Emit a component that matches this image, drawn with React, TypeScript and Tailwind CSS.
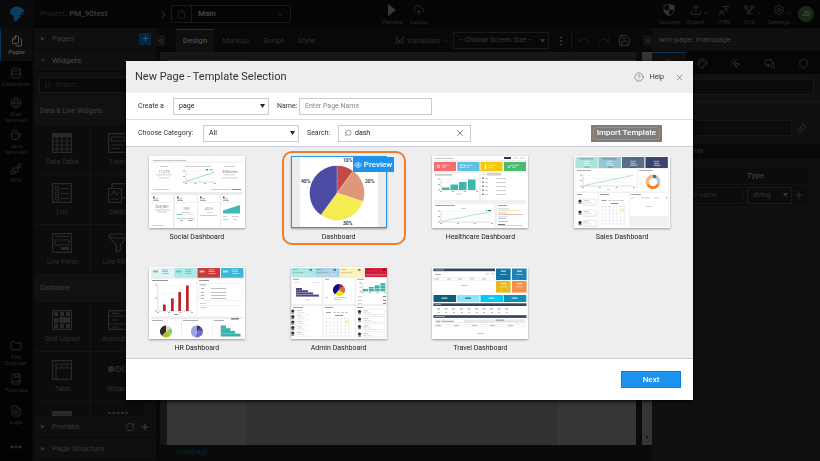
import React from "react";
import {
  ChevronDown, ChevronRight, ChevronsLeft, ChevronsRight, CircleHelp, CloudUpload, Coffee, Database, Eye,
  File, FileText, Files, Folder, GitFork, Globe, Languages, Link, MonitorSmartphone, MousePointerClick,
  Palette, Plus, Redo, RotateCw, Save, Search, Settings, Shield, Undo, Upload, X, BookMarked, Ellipsis,
  EllipsisVertical,
} from "lucide-react";

type Kids = { children?: React.ReactNode };

/* ---------- thumbnail drawing helpers (96 x 72 canvas) ---------- */

type BoxProps = { x: number; y: number; w: number; h: number; c?: string };
const Box = ({ x, y, w, h, c = "#ffffff" }: BoxProps) => <rect x={x} y={y} width={w} height={h} fill={c} />;
const Dash = ({ x, y, w, c = "#c4c4c4" }: { x: number; y: number; w: number; c?: string }) => (
  <rect x={x} y={y} width={w} height={0.8} fill={c} />
);

function slice(cx: number, cy: number, r: number, from: number, to: number) {
  const a = from * 2 * Math.PI;
  const b = to * 2 * Math.PI;
  const large = to - from > 0.5 ? 1 : 0;
  return `M${cx} ${cy}L${cx + r * Math.sin(a)} ${cy - r * Math.cos(a)}A${r} ${r} 0 ${large} 1 ${cx + r * Math.sin(b)} ${cy - r * Math.cos(b)}Z`;
}

function Pie({ cx, cy, r, parts }: { cx: number; cy: number; r: number; parts: [number, string][] }) {
  let at = 0;
  return (
    <g>
      {parts.map(([share, color], i) => {
        const d = slice(cx, cy, r, at, at + share);
        at += share;
        return <path key={i} d={d} fill={color} />;
      })}
    </g>
  );
}

function Canvas({ children, label }: Kids & { label: string }) {
  return (
    <svg viewBox="0 0 96 72" className="block h-[72px] w-24" role="img" aria-label={label} fontFamily="Roboto, sans-serif">
      {children}
    </svg>
  );
}

const Axes = ({ x, y, w, h }: { x: number; y: number; w: number; h: number }) => (
  <g>
    <path d={`M${x} ${y}h${w}M${x} ${y + h / 3}h${w}M${x} ${y + (2 * h) / 3}h${w}`} stroke="#eeeeee" strokeWidth={0.5} />
    <path d={`M${x} ${y}v${h}h${w}`} stroke="#bbbbbb" strokeWidth={0.5} fill="none" />
    {[0, 0.5, 1].map((k) => <Dash key={k} x={x - 3} y={y + k * h - 0.4} w={2} c="#999999" />)}
    {[0, 0.33, 0.66, 1].map((k) => <Dash key={k} x={x + k * w - 1} y={y + h + 1} w={2} c="#999999" />)}
  </g>
);

const Calendar = ({ x, y }: { x: number; y: number }) => (
  <g>
    <Dash x={x} y={y - 5} w={5} c="#888888" />
    {[7, 11, 15, 19].map((k) => <Dash key={k} x={x + k} y={y - 5} w={3} c="#bbbbbb" />)}
    <Dash x={x + 9} y={y - 2} w={8} c="#777777" />
    <Box x={x + 19} y={y + 3} w={4} h={4} c="#fdf0c4" />
    {[0, 1, 2, 3, 4, 5].map((r) =>
      [0, 1, 2, 3, 4, 5, 6].map((c) => <Box key={`${r}-${c}`} x={x + c * 3.7} y={y + 1 + r * 3.5} w={1} h={1} c="#c8c8c8" />)
    )}
    <path d={[0, 1, 2, 3, 4, 5].map((r) => `M${x - 1} ${y + 3 + r * 3.5}h27`).join("")} stroke="#ededed" strokeWidth={0.3} />
  </g>
);

const People = ({ x, ys }: { x: number; ys: number[] }) => (
  <g>
    {ys.map((y) => (
      <g key={y}>
        <circle cx={x} cy={y} r={1.6} fill="#2c2c2c" />
        <rect x={x - 1.5} y={y + 1.4} width={3} height={1.4} fill="#8a8a8a" />
        <Dash x={x + 4} y={y - 1} w={5} />
        <Dash x={x + 4} y={y + 1} w={8} c="#dcdcdc" />
        <path d={`M${x + 3} ${y + 3.4}h14`} stroke="#dddddd" strokeWidth={0.4} />
      </g>
    ))}
  </g>
);

function SocialArt() {
  return (
    <Canvas label="Social Dashboard">
      <Box x={2} y={1} w={92} h={70} c="#ededed" />
      <Box x={2} y={1} w={92} h={35} />
      <text x={4} y={4.6} fontSize={2} fill="#666">Dashboard Information and Statistics</text>
      <Dash x={2} y={5.6} w={92} c="#e6e6e6" />
      <Dash x={11} y={10} w={8} /><Dash x={36} y={10} w={26} /><Dash x={75} y={10} w={11} />
      <text x={15} y={17} fontSize={3.6} textAnchor="middle" fill="#777">11,275</text>
      <text x={81} y={17} fontSize={3.6} textAnchor="middle" fill="#777">8 Months</text>
      <Dash x={7} y={18.5} w={16} /><Dash x={10} y={21.5} w={10} /><Dash x={75} y={18.5} w={11} /><Dash x={73} y={21.5} w={16} />
      <Axes x={37} y={15} w={29} h={11} />
      <path d="M37 25.5L66 16" stroke="#5cc4c0" strokeWidth={0.6} />
      <Box x={57} y={13} w={2} h={1.5} c="#1aa8a2" /><Dash x={60} y={13.3} w={4} c="#999999" />
      <Dash x={4} y={33} w={16} /><Dash x={62} y={33} w={20} /><Dash x={83} y={33} w={9} c="#666666" />
      {[2, 26, 49, 72].map((x) => (
        <g key={x}>
          <Box x={x} y={39} w={22} h={32} />
          <Box x={x + 2} y={40.5} w={1.5} h={1.5} c="#444444" />
          <Dash x={x + 2} y={42.5} w={5} c="#999999" />
          <Dash x={x + 2} y={44} w={6} c="#999999" />
          <Dash x={x} y={46} w={22} c="#eeeeee" />
        </g>
      ))}
      <text x={13} y={52} fontSize={3.6} textAnchor="middle" fill="#666">$25,987</text>
      <Dash x={6} y={53.5} w={15} /><Dash x={8} y={55.5} w={10} /><Dash x={3} y={69} w={12} />
      <text x={37} y={53.5} fontSize={3.6} textAnchor="middle" fill="#777">153</text>
      <Dash x={32} y={56} w={9} /><Dash x={28} y={58} w={5} c="#45c0ba" /><Dash x={33} y={58} w={12} c="#e4e4e4" />
      <Dash x={28} y={62} w={18} /><Dash x={31} y={64} w={3} c="#999999" /><Dash x={39} y={64} w={5} c="#999999" />
      <text x={60} y={53.5} fontSize={3.6} textAnchor="middle" fill="#55b84d">402+</text>
      <Dash x={58} y={56} w={5} /><Dash x={51} y={59} w={17} />
      <path d="M74 57.5V54.5L91 49V57.5Z" fill="#40b9b4" />
      <Dash x={74} y={60} w={4} /><Dash x={83} y={60} w={7} /><Dash x={74} y={63} w={5} /><Dash x={84} y={63} w={4} />
    </Canvas>
  );
}

function PieArt() {
  return (
    <Canvas label="Dashboard">
      <Box x={0} y={0} w={96} h={72} c="#ececec" />
      <Box x={9} y={0} w={78} h={72} />
      <Pie cx={46} cy={37} r={27.3} parts={[[0.1, "#c44a4a"], [0.2, "#dc9878"], [0.3, "#f5ec50"], [0.4, "#4c4ba4"]]} />
      {[0, 0.1, 0.3, 0.6].map((k) => (
        <path key={k} d={`M46 37L${46 + 27.3 * Math.sin(k * 2 * Math.PI)} ${37 - 27.3 * Math.cos(k * 2 * Math.PI)}`} stroke="#ffffff" strokeWidth={0.3} />
      ))}
      <g fontSize={5} fontWeight={500} fill="#222">
        <text x={52} y={6}>10%</text>
        <text x={74} y={27}>20%</text>
        <text x={52} y={69}>30%</text>
        <text x={10} y={27}>40%</text>
      </g>
    </Canvas>
  );
}

function HealthArt() {
  return (
    <Canvas label="Healthcare Dashboard">
      <Box x={2} y={4} w={92} h={67} c="#f1f1f1" />
      <text x={2} y={3.2} fontSize={2} fill="#777">Healthcare Dashboard</text>
      <Box x={72} y={1} w={7} h={2} c="#2b3750" /><Dash x={81} y={1.6} w={5} /><Dash x={88} y={1.6} w={5} />
      {([[2, "#f76c6c"], [25.5, "#5cc0de"], [48.5, "#f8c908"], [72, "#4dba71"]] as [number, string][]).map(([x, c]) => (
        <g key={x}>
          <Box x={x} y={6} w={22} h={9} c={c} />
          <Dash x={x + 8} y={8.8} w={7} c="#ffffffb0" />
          <Dash x={x + 8} y={10.8} w={4} c="#ffffffb0" />
        </g>
      ))}
      <circle cx={6.5} cy={10.3} r={1.3} fill="none" stroke="#fff" strokeWidth={0.8} />
      <rect x={28.5} y={9} width={4} height={2.6} fill="none" stroke="#fff" strokeWidth={0.6} />
      <path d="M53.5 8.5v3M52 12h3" stroke="#fff" strokeWidth={1} />
      <path d="M75.5 10.5l1.3 1.3 2.4-3" stroke="#fff" strokeWidth={0.9} fill="none" />
      <Box x={2} y={17} w={45} h={27} />
      <Dash x={3} y={18.5} w={17} c="#888888" />
      <Axes x={9} y={23} w={36} h={11} />
      <g fill="#3bb7ab"><rect x={10} y={31.5} width={7.5} height={2.5} /><rect x={18.5} y={28.5} width={7.5} height={5.5} /><rect x={27} y={26} width={7.5} height={8} /><rect x={36} y={23.5} width={7.5} height={10.5} /></g>
      <Dash x={24} y={37.5} w={6} />
      <Box x={49} y={17} w={45} h={27} />
      <Dash x={50} y={18} w={4} /><Box x={55} y={17} w={14} h={2.6} c="#cfcfcf" />
      {[22, 26, 30, 34, 38].map((y) => (
        <g key={y}><Box x={50.5} y={y - 0.5} w={1} h={1.6} c="#222222" /><Dash x={53} y={y} w={3} /><Dash x={64} y={y} w={10} /></g>
      ))}
      <Box x={2} y={48} w={60} h={23} /><Box x={65} y={48} w={29} h={23} />
      <Dash x={3} y={49} w={20} c="#888888" /><Dash x={66} y={49} w={9} c="#888888" /><Dash x={29} y={52} w={5} />
      <Axes x={9} y={55} w={51} h={11} />
      <path d="M9 65.5L59 55.5" stroke="#84c8dd" strokeWidth={0.6} />
      <Box x={54} y={54} w={1} h={1} c="#1789a8" /><Dash x={56} y={54} w={3} c="#333333" />
      <Dash x={66} y={52.5} w={11} /><Dash x={66} y={54} w={22} c="#e8e0b0" />
      <Dash x={66} y={56.5} w={9} /><Dash x={66} y={58} w={25} c="#f4a6a6" />
      <Dash x={66} y={60.5} w={9} /><Dash x={66} y={62} w={8} c="#8ecbe0" />
      <Dash x={66} y={65} w={10} c="#70cdb3" /><Dash x={66} y={69} w={25} c="#e7c0b0" /><Dash x={66} y={68} w={7} c="#555555" />
    </Canvas>
  );
}

function SalesArt() {
  return (
    <Canvas label="Sales Dashboard">
      <Box x={1} y={1} w={94} h={70} c="#f2f2f2" />
      {([[1.5, "#a9e5dc"], [24.7, "#94c6d4"], [48, "#596d8b"], [71.5, "#3a426f"]] as [number, string][]).map(([x, c]) => (
        <g key={x}>
          <Box x={x} y={1} w={22.3} h={11} c={c} />
          <Dash x={x + 4} y={2.5} w={14} c="#44505ca0" /><Dash x={x + 8} y={4.8} w={6} c="#ffffff90" />
          <Dash x={x + 8.5} y={6.8} w={5} c="#ffffffc0" /><Dash x={x + 8} y={8.8} w={7} c="#ffffffc0" /><Dash x={x + 9} y={10.6} w={5} c="#44505ca0" />
        </g>
      ))}
      <Box x={1.5} y={13} w={61} h={22.5} /><Box x={64} y={13} w={30} h={22.5} />
      <Dash x={3} y={14} w={14} c="#999999" /><Dash x={65} y={14} w={14} c="#999999" />
      <Axes x={9} y={19} w={51} h={11} />
      <path d="M9 29.7L59 19.3" stroke="#84cbd8" strokeWidth={0.6} />
      <Dash x={33} y={33} w={3} />
      <g fill="none" strokeWidth={3}>
        <circle cx={79} cy={26} r={5.7} stroke="#ff7a12" />
        <path d="M79 20.3A5.7 5.7 0 0 1 82 21.2" stroke="#1c78b8" />
        <path d="M82 21.2A5.7 5.7 0 0 1 84 28.7" stroke="#a9cfec" />
        <path d="M74 28.7A5.7 5.7 0 0 1 79 20.3" stroke="#fdb77a" />
      </g>
      <Box x={1.5} y={37} w={22} h={34} /><Box x={25} y={37} w={30} h={34} /><Box x={56} y={37} w={38} h={23} />
      <Dash x={3} y={38} w={5} c="#888888" /><Dash x={26} y={38} w={9} c="#888888" /><Dash x={57} y={38} w={10} c="#888888" />
      <People x={6} ys={[45, 56, 66.5]} />
      <g fill="none" stroke="#cccccc" strokeWidth={0.4}><rect x={9} y={43} width={13} height={6.5} /><rect x={9} y={54} width={13} height={6.5} /><rect x={9} y={64.5} width={13} height={6} /></g>
      <Calendar x={27.5} y={49} />
      <Dash x={57} y={41.5} w={3} /><Dash x={67} y={41.5} w={9} /><Dash x={80} y={41.5} w={5} /><Box x={92} y={41} w={1} h={1.5} c="#999999" /><Dash x={72} y={50} w={6} />
      <Box x={56} y={60} w={38} h={11} c="#f1f1f1" />
    </Canvas>
  );
}

function HrArt() {
  return (
    <Canvas label="HR Dashboard">
      <Box x={2} y={1} w={92} h={70} c="#eeeeee" />
      {([[2, "#e1f3f7", "#9dabb0"], [25.3, "#a9eae8", "#7cb9b7"], [48.5, "#c73a3b", "#e9b1b1"], [72, "#3db8d8", "#a7e0ee"]] as [number, string, string][]).map(([x, c, t]) => (
        <g key={x}>
          <Box x={x} y={1} w={22.5} h={9.7} c={c} />
          <Box x={x + 2} y={3.5} w={5} h={2} c={t} /><Dash x={x + 11} y={2.5} w={6} c={t} /><Dash x={x + 11} y={4.2} w={6} c={t} /><Dash x={x + 11} y={6} w={7} c={t} />
        </g>
      ))}
      <Box x={2} y={12} w={45.5} h={37.5} /><Box x={48.5} y={12} w={45.5} h={37.5} />
      <Dash x={3} y={13} w={16} c="#777777" /><Dash x={50} y={13} w={10} c="#777777" />
      <Axes x={9} y={18} w={34} h={26} />
      <path d="M15 18v26M23 18v26M30.5 18v26M38 18v26" stroke="#e4e4e4" strokeWidth={0.4} />
      <g fill="#bf2328"><rect x={14} y={37.5} width={2.7} height={6.5} /><rect x={22} y={31.3} width={2.7} height={12.7} /><rect x={29.3} y={25} width={2.7} height={19} /><rect x={37} y={18.5} width={2.7} height={25.5} /></g>
      <Dash x={25} y={47} w={4} c="#777777" />
      <rect x={50} y={16.5} width={43} height={17} fill="none" stroke="#e0e0e0" strokeWidth={0.4} />
      <Dash x={51} y={17.5} w={6} c="#999999" />
      {[21, 25, 28, 31].map((y) => <g key={y}><Dash x={52} y={y} w={3} c="#999999" /><Dash x={62} y={y} w={15} c="#b0b0b0" /></g>)}
      <Dash x={51} y={36} w={6} /><Dash x={50} y={38} w={43} c="#eeeeee" /><Dash x={51} y={40} w={7} />
      <Box x={2} y={52} w={30} h={19} /><Box x={33} y={52} w={30} h={19} /><Box x={64} y={52} w={30} h={19} />
      <Box x={82} y={51} w={8} h={1.6} c="#888888" />
      <Dash x={3} y={53} w={11} c="#999999" /><Dash x={34} y={53} w={15} c="#999999" /><Dash x={65} y={53} w={10} c="#999999" />
      <Pie cx={17} cy={64.5} r={6} parts={[[0.15, "#f2cfbb"], [0.22, "#7fcf7a"], [0.25, "#b4bd16"], [0.38, "#2d2d26"]]} />
      <Pie cx={48} cy={64.5} r={6} parts={[[0.12, "#31345a"], [0.12, "#4a4f9a"], [0.3, "#6a6cd0"], [0.46, "#a0a4dd"]]} />
      <g fill="#35b4ac"><rect x={72} y={58.5} width={5} height={2.7} /><rect x={72} y={61.2} width={9.5} height={2.7} /><rect x={72} y={63.9} width={14} height={2.7} /><rect x={72} y={66.6} width={19.5} height={2.7} /></g>
      <path d="M71.8 58v11.5h20" stroke="#999" strokeWidth={0.4} fill="none" />
    </Canvas>
  );
}

function AdminArt() {
  return (
    <Canvas label="Admin Dashboard">
      <Box x={0} y={1} w={96} h={70} c="#efefef" />
      {([[0.5, "#a8e7e2"], [24.5, "#abd2ea"], [49, "#fcf0bd"], [74, "#d61f3b"]] as [number, string][]).map(([x, c]) => (
        <g key={x}>
          <Box x={x} y={1} w={x === 74 ? 22 : 24} h={9} c={c} />
          <Dash x={x + 1} y={2.2} w={5} c="#00000040" /><Dash x={x + 1} y={5.3} w={11} c="#00000030" /><Dash x={x + 1} y={7.5} w={20} c="#ffffff70" />
          <Box x={x + 18} y={2} w={2.5} h={1.7} c="#00000080" />
        </g>
      ))}
      <Box x={1} y={11} w={30} h={26} /><Box x={32.5} y={11} w={31} h={26} /><Box x={65} y={11} w={30} h={26} />
      <Dash x={2} y={11.8} w={6} c="#888888" /><Dash x={34} y={11.8} w={4} c="#888888" /><Dash x={66} y={11.8} w={7} c="#888888" />
      <Dash x={3} y={15} w={6} c="#dddddd" /><Dash x={20} y={15} w={8} c="#dddddd" />
      <g fill="#4c4b84"><rect x={5} y={21} width={6} height={2} /><rect x={5} y={23.2} width={12} height={2} /><rect x={5} y={25.4} width={17} height={2} /><rect x={5} y={27.6} width={23} height={2} /></g>
      <Dash x={14} y={32.5} w={5} />
      <Pie cx={48} cy={23} r={6} parts={[[0.13, "#c01525"], [0.22, "#d66a42"], [0.27, "#f3e600"], [0.38, "#0c0c86"]]} />
      <Dash x={34} y={30} w={3} /><Dash x={43} y={30} w={12} /><Dash x={43} y={32} w={8} />
      <g fill="#36b3a8"><rect x={72} y={22} width={5} height={2.2} /><rect x={77.8} y={20} width={5} height={4.2} /><rect x={83.6} y={18} width={5} height={6.2} /><rect x={89.4} y={16} width={5} height={8.2} /></g>
      <Axes x={71.5} y={16} w={23} h={8.3} />
      {[29, 33, 36].map((y) => <g key={y}><Dash x={67} y={y} w={4} /><Dash x={92} y={y} w={3} c="#666666" /></g>)}
      <Box x={1} y={39} w={30} h={32} /><Box x={32.5} y={39} w={31} h={32} /><Box x={65} y={39} w={30} h={32} />
      <Dash x={2} y={40} w={10} c="#888888" /><Dash x={34} y={40} w={8} c="#888888" /><Dash x={66} y={40} w={6} c="#888888" />
      <People x={1.8} ys={[44, 49.5, 55, 60.5, 66]} />
      <Calendar x={35} y={50} />
      <People x={68.5} ys={[44.5, 52, 59.5, 67]} />
      <g fill="none" stroke="#d8d8d8" strokeWidth={0.4}>{[42, 49.5, 57, 64.5].map((y) => <rect key={y} x={74} y={y} width={20} height={5.5} />)}</g>
    </Canvas>
  );
}

function TravelArt() {
  const bar = "#39435c";
  return (
    <Canvas label="Travel Dashboard">
      <Box x={1.5} y={1.5} w={61.5} h={2.7} c={bar} /><Dash x={3} y={2.5} w={9} c="#aab0c0" />
      <Dash x={3} y={7} w={6} c="#999999" /><Box x={54} y={6} w={3} h={1.6} c="#d8d8d8" /><Box x={59} y={6} w={3} h={1.6} c="#d8d8d8" />
      {[3, 15, 26, 38, 50].map((x) => <Dash key={x} x={x} y={11.6} w={4} c="#aaaaaa" />)}
      <rect x={2} y={10.5} width={60} height={2.6} fill="none" stroke="#dddddd" strokeWidth={0.4} />
      <Dash x={29} y={18} w={7} c="#bbbbbb" />
      {([[64, 1.5, "#0c76a6"], [80, 1.5, "#1b84b5"], [64, 14, "#e9ba20"], [80, 14, "#f78f4c"]] as [number, number, string][]).map(([x, y, c]) => (
        <g key={`${x}-${y}`}><Box x={x} y={y} w={14.6} h={11.6} c={c} /><Box x={x + 5} y={y + 2} w={5} h={1.3} c="#ffffffb0" /><Dash x={x + 4} y={y + 5.5} w={7} c="#ffffff90" /></g>
      ))}
      {([[1.5, "#0a5f7a"], [25, "#84e7ff"], [48.5, "#00c9fb"], [71.7, "#0894b9"]] as [number, string][]).map(([x, c]) => (
        <g key={x}><Box x={x} y={28} w={22.6} h={7} c={c} /><Box x={x + 8} y={30.5} w={6} h={1.3} c={x === 25 ? "#466b77" : "#ffffffb0"} /></g>
      ))}
      <Box x={1.5} y={36.3} w={93} h={2.7} c={bar} /><Dash x={3} y={37.3} w={6} c="#aab0c0" />
      {[5, 12.5, 20, 28, 35.5, 43, 50.5, 58, 65.5, 73].map((x) => (
        <g key={x}><Dash x={x} y={41.5} w={3} c="#888888" /><Dash x={x + 1} y={45} w={1.4} c="#888888" /></g>
      ))}
      <Box x={1.5} y={48.2} w={93} h={2.7} c={bar} /><Dash x={3} y={49.2} w={10} c="#aab0c0" />
      <Box x={3} y={52.5} w={90} h={3.3} c="#e7e7e7" /><Dash x={4} y={54} w={4} c="#999999" /><Dash x={10} y={54} w={12} c="#aaaaaa" /><Box x={22} y={53} w={10} h={2} /><Dash x={64} y={52.7} w={8} c="#777777" />
      <rect x={3} y={57.5} width={90} height={2.4} fill="none" stroke="#dddddd" strokeWidth={0.4} />
      {[4, 22, 40, 58, 76].map((x) => <Dash key={x} x={x} y={58.3} w={5} c="#aaaaaa" />)}
      <Dash x={45} y={66} w={7} c="#bbbbbb" />
    </Canvas>
  );
}

/* ---------- shared controls ---------- */

function SelectBox({ label, value, options = [], className, size = "text-[7px]" }: { label: string; value: string; options?: string[]; className: string; size?: string }) {
  return (
    <span className={`grid items-center border ${className}`}>
      <select aria-label={label} defaultValue={value} className={`[grid-area:1/1] h-full w-full appearance-none bg-transparent px-[5px] outline-none ${size}`}>
        {[value, ...options].map((o) => <option key={o}>{o}</option>)}
      </select>
      <svg viewBox="0 0 5 4" aria-hidden className="pointer-events-none mr-[3px] h-1 w-[5px] [grid-area:1/1] justify-self-end" fill="currentColor">
        <path d="M0 0h5L2.500 4z" />
      </svg>
    </span>
  );
}

function RailItem({ icon, label, className }: { icon: React.ReactNode; label: string; className: string }) {
  return (
    <button className={`flex w-full shrink-0 flex-col items-center gap-[2px] text-center text-[6px] leading-[6px] text-[#282828] ${className}`}>
      {icon}
      <span className="w-[32px]">{label}</span>
    </button>
  );
}

function HeaderAction({ icon, label, menu, className = "" }: { icon: React.ReactNode; label: string; menu?: boolean; className?: string }) {
  return (
    <button className={`flex shrink-0 flex-col items-center gap-[3px] text-[6px] leading-[6px] text-[#2a2a2a] ${className}`}>
      <span className="flex h-3 items-end justify-center">
        {icon}
        {menu && <ChevronDown size={6} className="-mr-[7px] ml-px text-[#444]" />}
      </span>
      {label}
    </button>
  );
}

function Tree({ label, open, children }: Kids & { label: string; open?: boolean }) {
  return (
    <div className="flex h-[22px] shrink-0 items-center border-b border-[#080808] px-[6px]">
      <button className="flex flex-1 items-center gap-[6px] text-[8px] text-[#383838]" aria-expanded={!!open}>
        <span aria-hidden className="w-[6px] text-[5px]">{open ? "▼" : "▶"}</span>
        <span className={open ? "text-[#4a4a4a]" : ""}>{label}</span>
      </button>
      {children}
    </div>
  );
}

function Glyph({ children }: Kids) {
  return (
    <svg viewBox="0 0 20 20" className="size-5 text-[#292929]" fill="none" stroke="currentColor" strokeWidth={1.2} aria-hidden>
      {children}
    </svg>
  );
}

const glyphs: Record<string, React.ReactNode> = {
  "Data Table": <><path d="M.6.6h18.8v18.8H.6zM5 4v15M10 4v15M15 4v15M1 8h18M1 12h18M1 16h18" /><path d="M0 2.5h20" strokeWidth={4} /></>,
  Form: <path d="M.6.6h18.8v18.8H.6zM3.5 4h13v4h-13zM3.5 12h13M3.5 15.5h8" />,
  List: <path d="M.6.6h18.8v18.8H.6zM3.5 4h3v3h-3zM3.5 9h3v3h-3zM3.5 14h3v3h-3zM9 5.5h8M9 10.5h8M9 15.5h8" />,
  Cards: <path d="M4 5V.6h15v14h-4M.6 5.5h13v14H.6zM3 13l3-5 3 4 2-3M3 16h8" />,
  "Live Form": <><path d="M.6.6h18.8v18.8H.6zM3 3.5h14M3 7h14v5H3z" /><path d="M9 15.5h8" strokeWidth={3} /></>,
  "Live Filter": <path d="M.6 3c0-3 18.800 -3 18.800 0 0 1.500-6 7-7 9v5l-4 2.500v-7.500C7 10 .6 5 .6 3zM.6 3c0 3 18.800 3 18.800 0" />,
  "Grid Layout": <><path d="M.6.6h18.8v18.8H.6z" /><path fill="currentColor" stroke="none" d="M2 2h4v4H2zM8 2h4v4H8zM14 2h4v4h-4zM2 8h4v5H2zM7 7h11v6H7zM2 14h4v4H2zM8 14h4v4H8zM14 14h4v4h-4z" /></>,
  Accordion: <path d="M.6.6h18.8v18.8H.6zM1 6h18M1 14h18M4 3.300h7M4 10h7M4 17h7" />,
  Tabs: <path d="M.6.6h18.8v18.8H.6zM4 19V4h15M4 8h15M10 4v4M15 4v4" />,
  Wizard: <><circle cx="3" cy="9" r="2.600" fill="currentColor" /><circle cx="10" cy="9" r="2.600" /><circle cx="17" cy="9" r="2.600" /><path d="M9 9h2" /></>,
  Panel: <path d="M0 4h20" strokeWidth={6} />,
  Tile: <path d="M0 3h20" strokeWidth={2} strokeDasharray="3 1.300" />,
};

function WidgetGrid({ names }: { names: string[] }) {
  return (
    <div className="grid w-[110px] shrink-0 grid-cols-2 gap-px bg-[#141414] py-px">
      {names.map((n) => (
        <button key={n} className="flex h-[49px] flex-col items-center gap-1 overflow-hidden bg-[#0c0c0c] pt-2 text-[7px] leading-[10px] whitespace-nowrap text-[#303030]">
          <Glyph>{glyphs[n]}</Glyph>
          {n !== "Panel" && n !== "Tile" && n}
        </button>
      ))}
    </div>
  );
}

function SectionTitle({ children }: Kids) {
  return <h3 className="flex h-[26px] shrink-0 items-center bg-[#111] px-[5px] text-[7px] font-medium text-[#383838]">{children}</h3>;
}

/* ---------- page regions ---------- */

function Rail() {
  return (
    <nav className="flex w-8 shrink-0 flex-col bg-[#030303]">
      <RailItem icon={<Files size={12} className="-scale-x-100" />} label="Pages" className="h-8 border-l border-[#083458] bg-[#0e0e0e] pt-[6px] font-medium !text-[#555]" />
      <RailItem icon={<Database size={12} />} label="Databases" className="h-[30px] pt-[6px]" />
      <RailItem icon={<Globe size={12} />} label="Web Services" className="h-8 pt-[6px]" />
      <RailItem icon={<Coffee size={12} />} label="Java Services" className="h-[34px] pt-[6px]" />
      <RailItem
        icon={<svg viewBox="0 0 12 12" className="size-3" fill="none" stroke="currentColor" aria-hidden><path d="M1 8h4v3H1zM8 1h3v3H8zM3 8V5h5M5 9h3V3" /></svg>}
        label="APIs"
        className="h-[30px] pt-[6px]"
      />
      <span className="flex-1" />
      <RailItem icon={<Folder size={12} />} label="File Explorer" className="h-[33px]" />
      <RailItem icon={<BookMarked size={12} />} label="Tutorials" className="h-8" />
      <RailItem icon={<FileText size={12} />} label="Logs" className="h-8" />
      <button aria-label="More" className="flex h-[24px] justify-center pt-[3px] text-[#333]"><Ellipsis size={14} strokeWidth={3} /></button>
    </nav>
  );
}

function Sidebar() {
  return (
    <aside className="-mt-px ml-[2px] flex w-[122px] shrink-0 flex-col overflow-hidden bg-[#0f0f0f] pb-px">
      <Tree label="Pages">
        <button aria-label="Add page" className="mr-[-1px] flex size-3 items-center justify-center bg-[#06263f] text-[#1f6fae]"><Plus size={9} /></button>
      </Tree>
      <Tree label="Widgets" open />
      <div className="flex h-[26px] shrink-0 items-center px-[5px]">
        <label className="flex h-4 flex-1 items-center gap-1 border border-[#1a1a1a] bg-[#080808] px-1 text-[#333]">
          <Search size={8} className="-scale-x-100" />
          <input aria-label="Search widgets" placeholder="Search..." className="w-full bg-transparent text-[7px] outline-none placeholder:text-[#222]" />
        </label>
      </div>
      <div className="flex min-h-0 flex-1 flex-col overflow-hidden pl-px">
        <SectionTitle>Data &amp; Live Widgets</SectionTitle>
        <WidgetGrid names={["Data Table", "Form", "List", "Cards", "Live Form", "Live Filter"]} />
        <SectionTitle>Container</SectionTitle>
        <WidgetGrid names={["Grid Layout", "Accordion", "Tabs", "Wizard", "Panel", "Tile"]} />
      </div>
      <Tree label="Prefabs">
        <span className="flex items-center gap-[5px] text-[#383838]"><RotateCw size={10} /><Plus size={10} strokeWidth={3} /></span>
      </Tree>
      <Tree label="Page Structure" />
    </aside>
  );
}

function TopBar() {
  return (
    <header className="flex h-[29px] shrink-0 items-center border-b border-[#0c0c0c] bg-[#050505]">
      <div className="flex h-full w-[34px] items-center justify-center bg-[#0a0a0a]">
        <svg viewBox="0 0 16 16" className="size-4" fill="#0b3f60" aria-label="WaveMaker" role="img">
          <path d="M1 7C1 3 4 .5 8 .5S15.500 3.500 15.500 7c-1.500-1-3-1-4.500 0 1.500 0 3 .5 3.500 2-2-.5-3.500-.2-4.500 1 1 0 2 .5 2.200 1.800-1.700-.6-2.700 0-3.700 2-.5 1.200-2 1.700-3.500 1.200C6 13 5 12 3.500 11.500 5 11.500 6 10.500 4.500 9.500 3.500 9 1.500 9 1 7z" />
        </svg>
      </div>
      <p className="w-[126px] pl-[6px] text-[8px] text-[#262626]">Project: <span className="text-[#4a4a4a]">PM_90test</span></p>
      <ChevronRight size={11} className="-ml-[2px] text-[#3a3a3a]" />
      <div className="ml-[2px] flex h-[18px] w-[120px] items-center rounded-[2px] border border-[#1a1a1a] text-[#4a4a4a]">
        <span className="flex h-full w-5 items-center justify-center border-r border-[#1a1a1a]"><File size={9} className="text-[#262626]" /></span>
        <button className="flex flex-1 items-center justify-between pr-[6px] pl-[6px] text-[8px] font-medium">Main<ChevronDown size={7} /></button>
      </div>
      <div className="ml-[91px] flex gap-[7px]">
        <HeaderAction label="Preview" icon={<svg viewBox="0 0 12 12" className="size-3" fill="#383838" aria-hidden><path d="M2 0l8 6-8 6z" /></svg>} />
        <HeaderAction label="Deploy" icon={<CloudUpload size={12} />} />
      </div>
      <div className="ml-auto flex items-center pr-[6px]">
        <HeaderAction label="Security" icon={<svg viewBox="0 0 12 12" className="size-3" aria-hidden><path d="M6 .5l5 1V6c0 3-2.500 4.500-5 5.500C3.500 10.500 1 9 1 6V1.500z" fill="none" stroke="#333" /><path d="M6 .5l5 1V6H6zM6 6v5.500C3.500 10.500 1 9 1 6z" fill="#333" /></svg>} />
        <HeaderAction label="Export" menu icon={<Upload size={12} />} className="ml-[7px]" />
        <HeaderAction label="I18N" icon={<Languages size={12} className="-scale-x-100" />} className="ml-[13px]" />
        <HeaderAction label="VCS" menu icon={<GitFork size={12} />} className="ml-[13px]" />
        <HeaderAction label="Settings" menu icon={<Settings size={12} />} className="ml-[13px]" />
        <span className="ml-2 flex size-4 items-center justify-center rounded-full bg-[#1b2912] text-[7px] font-medium text-[#4a4a4a]">JS</span>
      </div>
    </header>
  );
}

function Workspace() {
  return (
    <main className="flex min-w-0 flex-1 flex-col bg-[#080808]">
      <div className="flex h-[23px] shrink-0 items-center text-[8px] text-[#2e2e2e]">
        <button aria-label="Collapse panel" className="flex h-[11px] w-[9px] items-center justify-center bg-[#121212] text-[#444]"><ChevronsLeft size={8} /></button>
        <button className="ml-[11px] h-full w-[38px] border-t border-[#0a3557] bg-[#0f0f0f] font-medium text-[#4a4a4a]">Design</button>
        <button className="ml-2">Markup</button>
        <button className="ml-[14px]">Script</button>
        <button className="ml-[14px]">Style</button>
        <button className="ml-auto flex items-center gap-[3px]"><span className="text-[#3a3a3a]">[x]</span> Variables <ChevronDown size={6} /></button>
        <SelectBox label="Screen size" value="-- Choose Screen Size --" className="ml-1 h-[17px] w-[96px] border-[#1a1a1a] text-[#383838]" />
        <button aria-label="More" className="ml-[6px] text-[#4a4a4a]"><EllipsisVertical size={12} strokeWidth={2} /></button>
        <span className="ml-1 flex h-[17px] items-center gap-2 border-l border-[#161616] pl-[6px]">
          <button aria-label="Undo" className="text-[#1b1b1b]"><Undo size={12} /></button>
          <button aria-label="Redo" className="text-[#1b1b1b]"><Redo size={12} /></button>
          <button aria-label="Save" className="text-[#3a3a3a]"><Save size={13} strokeWidth={1.5} /></button>
        </span>
        <button aria-label="Expand panel" className="ml-[12px] flex h-[11px] w-[9px] items-center justify-center bg-[#121212] text-[#444]"><ChevronsRight size={8} /></button>
      </div>
      <div className="ml-1 flex min-h-0 flex-1 bg-[#0a0a0a]">
        <div className="w-[7px] border-t-8 border-[#151817] bg-[#161616]" />
        <div className="flex flex-1 border-t-8 border-[#151817]">
          <div className="w-[78px] border-r border-[#3c3c3c] bg-[#363636]" />
          <div className="flex-1 bg-[#313131]" />
          <div className="w-[78px] border-l border-[#3c3c3c] bg-[#363636]" />
        </div>
        <div className="ml-[6px] flex w-[10px] items-end justify-center bg-[#353535] pb-1 text-[5px] text-[#080808]" aria-hidden>▼</div>
      </div>
      <div className="ml-1 h-4 shrink-0 bg-[#0a0a0a] pl-[17px] text-[7px] leading-[14px] text-[#08253f]">mainpage</div>
    </main>
  );
}

function Properties() {
  return (
    <aside className="flex w-[168px] shrink-0 flex-col bg-[#101010] text-[#333]">
      <h2 className="flex h-[23px] items-center border-b border-[#080808] pl-[7px] text-[8px] text-[#404040]">wm-page: mainpage</h2>
      <div className="grid h-[22px] grid-cols-5 bg-[#060606] text-[#303030]">
        <button aria-label="Properties" className="flex items-center justify-center border-t border-[#083458] bg-[#101010]"><Settings size={11} /></button>
        <button aria-label="Styles" className="flex items-center justify-center"><Palette size={11} /></button>
        <button aria-label="Events" className="flex items-center justify-center"><MousePointerClick size={11} /></button>
        <button aria-label="Device" className="flex items-center justify-center"><MonitorSmartphone size={11} /></button>
        <button aria-label="Security" className="flex items-center justify-center"><Shield size={11} /></button>
      </div>
      <div className="border-b border-[#181818] px-[6px] pt-[5px] pb-[6px]">
        <input aria-label="Search properties" className="block h-4 w-full border border-[#181818] bg-[#0b0b0b] text-[7px]" />
      </div>
      <div className="flex items-center gap-[5px] pt-[18px] pr-[14px] pb-2 pl-[6px]">
        <input aria-label="Value" className="h-4 min-w-0 flex-1 border border-[#161616] bg-[#0b0b0b] text-[7px]" />
        <Link size={9} />
      </div>
      <h3 className="h-[15px] bg-[#080808] pl-1 text-[8px] leading-[14px]">Page Params</h3>
      <table className="mt-[9px] mr-3 table-fixed border-collapse bg-[#0c0c0c] text-left text-[8px]">
        <thead><tr className="h-[16px]"><th className="w-[91px] pl-2 font-medium">Name</th><th className="pl-1 font-medium text-[#404040]">Type</th><th className="w-[14px]" /></tr></thead>
        <tbody>
          <tr className="h-[22px] border-t border-[#111]">
            <td className="pl-2"><input aria-label="Parameter name" placeholder="Parameter name" className="block h-[17px] w-full border border-[#161616] bg-[#0b0b0b] px-1 text-[7px] placeholder:text-[#282828]" /></td>
            <td className="pr-[2px] pl-1"><SelectBox label="Type" value="string" className="h-[17px] w-full border-[#1a1a1a] text-[#383838]" /></td>
            <td><button aria-label="Add parameter" className="block"><Plus size={10} /></button></td>
          </tr>
        </tbody>
      </table>
    </aside>
  );
}

const templates: { name: string; art: React.ReactNode; selected?: boolean }[] = [
  { name: "Social Dashboard", art: <SocialArt /> },
  { name: "Dashboard", art: <PieArt />, selected: true },
  { name: "Healthcare Dashboard", art: <HealthArt /> },
  { name: "Sales Dashboard", art: <SalesArt /> },
  { name: "HR Dashboard", art: <HrArt /> },
  { name: "Admin Dashboard", art: <AdminArt /> },
  { name: "Travel Dashboard", art: <TravelArt /> },
];

function TemplateDialog() {
  return (
    <div className="fixed inset-0 flex items-start justify-center pt-[61px] pr-px">
      <section role="dialog" aria-label="New Page - Template Selection" className="w-[567px] bg-white text-[#333] shadow-[0_1px_4px_#000]">
        <header className="flex h-8 items-center bg-[#eee] px-[9px]">
          <h1 className="flex-1 text-[11px]">New Page - Template Selection</h1>
          <button className="flex items-center gap-[6px] text-[7px]"><CircleHelp size={10} strokeWidth={1.5} className="text-[#666]" />Help</button>
          <button aria-label="Close" className="ml-[11px] text-[#666]"><X size={9} strokeWidth={1.7} /></button>
        </header>
        <div className="flex h-[27px] items-center border-b border-[#ddd] px-3 text-[7px]">
          <span className="w-[35px]">Create a</span>
          <SelectBox label="Create a" value="page" options={["partial"]} className="h-[17px] w-24 border-[#ccc] text-[#222]" />
          <label htmlFor="page-name" className="ml-2 w-[22px]">Name:</label>
          <input id="page-name" placeholder="Enter Page Name" className="h-[17px] w-[133px] border border-[#ccc] px-[5px] text-[7px] outline-none placeholder:text-[#888]" />
        </div>
        <div className="flex h-[27px] items-center border-b border-[#ccd] px-3 text-[7px]">
          <span className="w-[65px]">Choose Category:</span>
          <SelectBox label="Choose Category" value="All" className="h-[17px] w-24 border-[#ccc] text-[#222]" />
          <label htmlFor="template-search" className="ml-2 w-[31px]">Search:</label>
          <span className="flex h-[17px] w-[133px] items-center gap-[3px] border border-[#ccc] px-[5px] text-[#555]">
            <Search size={8} strokeWidth={1.7} className="shrink-0 -scale-x-100" />
            <input id="template-search" defaultValue="dash" className="min-w-0 flex-1 text-[7px] text-[#222] outline-none" />
            <button aria-label="Clear search"><X size={10} strokeWidth={1.7} /></button>
          </span>
          <button className="mr-[19px] ml-auto h-[17px] w-[71px] bg-[#7d7d7d] p-[2px] text-[8px] font-medium text-white">
            <span className="flex h-full items-center justify-center rounded-[4px] border border-[#f47a20] whitespace-nowrap">Import Template</span>
          </button>
        </div>
        <ul className="grid h-[211px] grid-cols-4 content-start bg-[#eee] pt-[9px]">
          {templates.map((t) => (
            <li key={t.name} className="relative h-[111px]">
              <button aria-pressed={!!t.selected} className="flex w-full flex-col items-center gap-1 text-[7px] leading-[10px] text-[#222]">
                <span className={`bg-white shadow-[0_1px_2px_#999] ${t.selected ? "outline outline-[#2b97ea] -outline-offset-1" : ""}`}>{t.art}</span>
                {t.name}
              </button>
              {t.selected && (
                <>
                  <button className="absolute top-px right-[16px] flex h-[15px] w-[41px] items-center justify-center gap-[2px] bg-[#1b93ef] text-[8px] font-medium text-white">
                    <Eye size={8} />Preview
                  </button>
                  <span aria-hidden className="pointer-events-none absolute -top-[5px] left-[14px] h-[94px] w-[124px] rounded-[10px] border-2 border-[#f07d2a]" />
                </>
              )}
            </li>
          ))}
        </ul>
        <footer className="flex h-[42px] items-center justify-end border-t border-[#ccc] px-3">
          <button className="h-[17px] w-[60px] border border-[#0b82de] bg-[#1b93ef] text-[8px] font-medium text-white">Next</button>
        </footer>
      </section>
    </div>
  );
}

export default function App() {
  return (
    <div className="flex h-screen flex-col overflow-hidden bg-[#080808] font-['Roboto',sans-serif]">
      <TopBar />
      <div className="flex min-h-0 flex-1">
        <Rail />
        <Sidebar />
        <Workspace />
        <Properties />
      </div>
      <TemplateDialog />
    </div>
  );
}
